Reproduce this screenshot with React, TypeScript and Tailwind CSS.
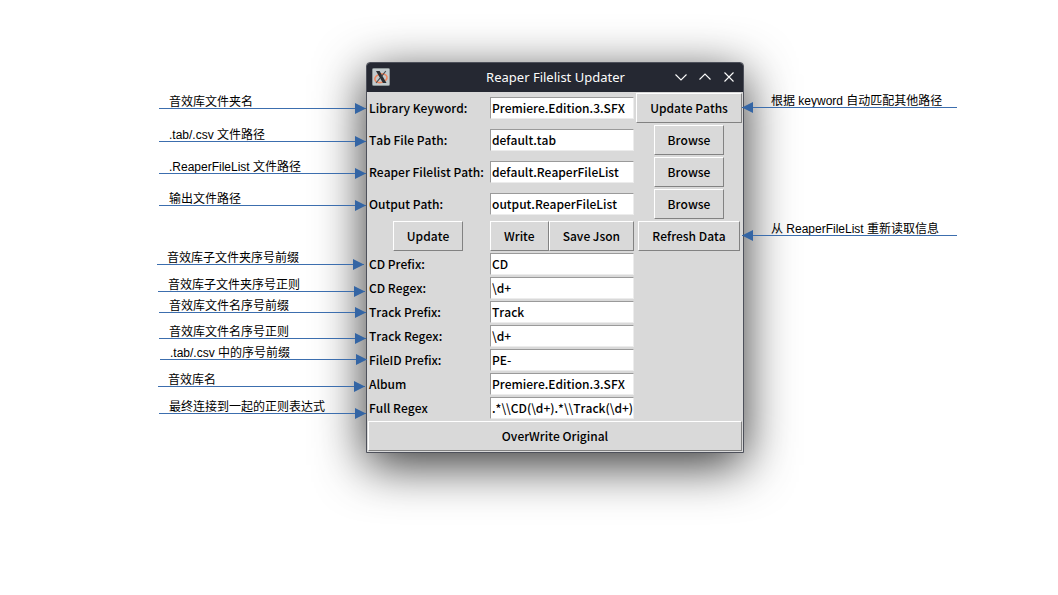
import type { ReactNode } from "react";

const callouts = [
  { text: "音效库文件夹名", place: "top-8 right-full" },
  { text: ".tab/.csv 文件路径", place: "top-[65px] right-full" },
  { text: ".ReaperFileList 文件路径", place: "top-[97px] right-full" },
  { text: "输出文件路径", place: "top-[129px] right-full" },
  { text: "音效库子文件夹序号前缀", place: "top-[188px] right-[380px]" },
  { text: "音效库子文件夹序号正则", place: "top-[215px] right-[379px]" },
  { text: "音效库文件名序号前缀", place: "top-[236px] right-full" },
  { text: "音效库文件名序号正则", place: "top-[262px] right-full" },
  { text: ".tab/.csv 中的序号前缀", place: "top-[283px] right-[377px]" },
  { text: "音效库名", place: "top-[310px] right-[379px]" },
  { text: "最终连接到一起的正则表达式", place: "top-[337px] right-full" },
];

const calloutFont =
  "absolute z-10 whitespace-nowrap font-['Liberation_Sans','Noto_Sans_CJK_SC',sans-serif] text-xs text-black";

function LeftCallout({ text, place }: { text: string; place: string }) {
  return (
    <div className={`${calloutFont} w-[207px] ${place}`}>
      <p className="pt-0.5 pl-2.5 leading-3">{text}</p>
      <div className="relative h-px bg-[#3c6eae]">
        <svg className="absolute -top-[5px] right-0 h-[11px] w-[11px]" viewBox="0 0 11 11" aria-hidden="true">
          <path d="M0 0L11 5.5L0 11Z" fill="#3465a4" />
        </svg>
      </div>
    </div>
  );
}

function RightCallout({ text, place }: { text: string; place: string }) {
  return (
    <div className={`${calloutFont} left-[376px] w-[215px] ${place}`}>
      <p className="pt-0.5 pl-[29px] leading-3">{text}</p>
      <div className="relative h-px bg-[#3c6eae]">
        <svg className="absolute -top-[5px] left-0 h-[11px] w-[11px]" viewBox="0 0 11 11" aria-hidden="true">
          <path d="M11 0L0 5.5L11 11Z" fill="#3465a4" />
        </svg>
      </div>
    </div>
  );
}

function Button({ children, className = "" }: { children: ReactNode; className?: string }) {
  return (
    <button
      type="button"
      className={`h-[30px] border border-t-white border-l-white border-r-[#828282] border-b-[#828282] bg-[#d9d9d9] px-[13px] whitespace-nowrap ${className}`}
    >
      {children}
    </button>
  );
}

function Field({ id, label, value, children }: { id: string; label: string; value: string; children?: ReactNode }) {
  return (
    <>
      <label htmlFor={id} className="pl-0.5 whitespace-nowrap">
        {label}
      </label>
      <div className="p-px">
        <input
          id={id}
          type="text"
          defaultValue={value}
          className="block h-[22px] w-36 border border-t-[#9a9a9a] border-l-[#9a9a9a] border-r-[#ececec] border-b-[#ececec] bg-white pb-0.5 pl-px outline-none"
        />
      </div>
      <div className="flex justify-center">{children}</div>
    </>
  );
}

function TitleButton({ label, d }: { label: string; d: string }) {
  return (
    <button type="button" aria-label={label} className="flex h-6 w-6 items-center justify-center">
      <svg className="h-4 w-4" viewBox="0 0 16 16" fill="none" stroke="#fcfcfc" strokeWidth="1.1" aria-hidden="true">
        <path d={d} />
      </svg>
    </button>
  );
}

export default function App() {
  return (
    <main className="flex min-h-screen items-start justify-center overflow-hidden bg-white pt-[62px] pl-[52px]">
      <div className="relative">
        <section className="rounded-t-[4px] border border-[#4d505a] bg-[#d9d9d9] shadow-[0_12px_50px_rgba(0,0,0,0.8)]">
          <header className="grid h-[29px] grid-cols-[1fr_auto_1fr] items-center rounded-t-[3px] bg-[#252832] pr-1 pb-0.5 pl-[5px]">
            <svg className="h-[18px] w-[18px]" viewBox="0 0 18 18" aria-hidden="true">
              <rect x="0.5" y="0.5" width="17" height="17" rx="1" fill="#c3cbcd" stroke="#8d9597" />
              <ellipse cx="8.6" cy="10.2" rx="6.2" ry="4.2" fill="none" stroke="#f08a62" strokeWidth="1.6" transform="rotate(-15 9 9)" />
              <path d="M4 3H7.6L14.5 15H10.9Z" fill="#2c2f33" />
              <path d="M13.8 3L9.6 8.4M8 10.2L4 15" stroke="#4a4d50" strokeWidth="1.1" />
            </svg>
            <h1 className="font-['Noto_Sans',sans-serif] text-[13px] leading-5 text-[#fcfcfc]">Reaper Filelist Updater</h1>
            <div className="-mr-0.5 flex justify-end">
              <TitleButton label="Minimize" d="M2.5 5.5L8 11L13.5 5.5" />
              <TitleButton label="Maximize" d="M2.5 10.5L8 5L13.5 10.5" />
              <TitleButton label="Close" d="M3.5 3.5L12.5 12.5M12.5 3.5L3.5 12.5" />
            </div>
          </header>

          <form className="font-['Noto_Sans_CJK_SC',sans-serif] text-xs leading-5 font-medium text-black [font-kerning:none]">
            <div className="grid auto-rows-[32px] grid-cols-[122px_146px_108px] items-center">
              <Field id="keyword" label="Library Keyword:" value="Premiere.Edition.3.SFX">
                <Button>Update Paths</Button>
              </Field>
              <Field id="tab" label="Tab File Path:" value="default.tab">
                <Button>Browse</Button>
              </Field>
              <Field id="filelist" label="Reaper Filelist Path:" value="default.ReaperFileList">
                <Button>Browse</Button>
              </Field>
              <Field id="output" label="Output Path:" value="output.ReaperFileList">
                <Button>Browse</Button>
              </Field>
              <div className="flex justify-center">
                <Button>Update</Button>
              </div>
              <div className="flex justify-between px-px">
                <Button>Write</Button>
                <Button>Save Json</Button>
              </div>
              <div className="flex justify-center">
                <Button>Refresh Data</Button>
              </div>
            </div>
            <div className="grid auto-rows-[24px] grid-cols-[122px_146px_108px] items-center">
              <Field id="cd-prefix" label="CD Prefix:" value="CD" />
              <Field id="cd-regex" label="CD Regex:" value="\d+" />
              <Field id="track-prefix" label="Track Prefix:" value="Track" />
              <Field id="track-regex" label="Track Regex:" value="\d+" />
              <Field id="file-id" label="FileID Prefix:" value="PE-" />
              <Field id="album" label="Album" value="Premiere.Edition.3.SFX" />
              <Field id="full-regex" label="Full Regex" value=".*\\CD(\d+).*\\Track(\d+)" />
            </div>
            <div className="flex p-px">
              <Button className="flex-1">OverWrite Original</Button>
            </div>
          </form>
        </section>

        {callouts.map((c) => (
          <LeftCallout key={c.text} text={c.text} place={c.place} />
        ))}
        <RightCallout text="根据 keyword 自动匹配其他路径" place="top-[31px]" />
        <RightCallout text="从 ReaperFileList 重新读取信息" place="top-[159px]" />
      </div>
    </main>
  );
}
